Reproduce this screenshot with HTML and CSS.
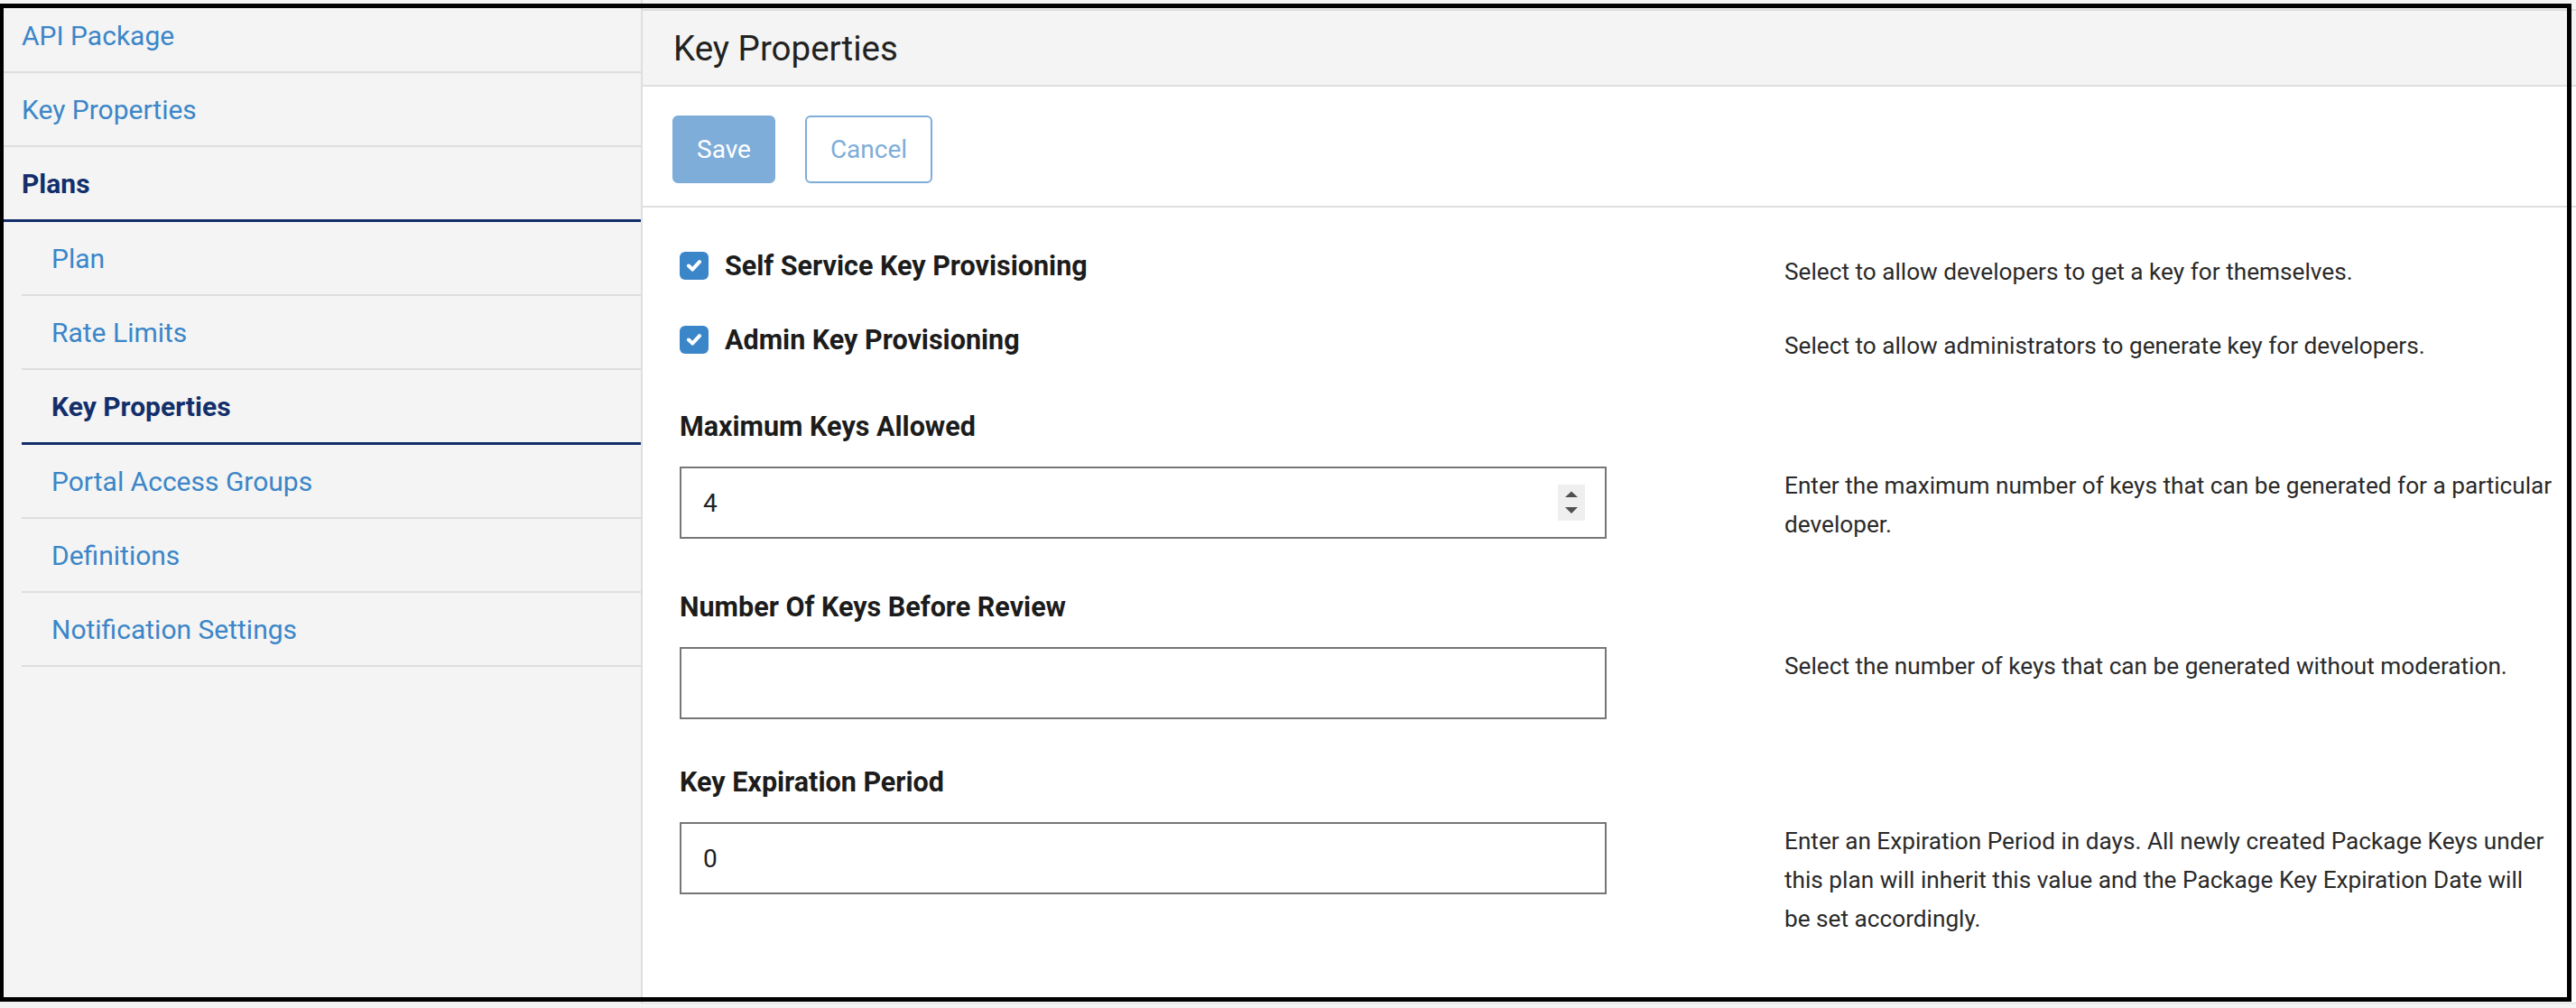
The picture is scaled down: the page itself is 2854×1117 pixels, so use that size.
FILE: index.html
```html
<!DOCTYPE html>
<html lang="en">
<head>
<meta charset="utf-8">
<title>Key Properties</title>
<link rel="stylesheet" href="styles.css">
</head>
<body>
<div class="app">
  <nav class="sidebar">
    <a class="nav-item" href="#">API Package</a>
    <a class="nav-item" href="#">Key Properties</a>
    <a class="nav-item active" href="#">Plans</a>
    <div class="subnav">
      <a class="nav-item" href="#">Plan</a>
      <a class="nav-item" href="#">Rate Limits</a>
      <a class="nav-item active" href="#">Key Properties</a>
      <a class="nav-item" href="#">Portal Access Groups</a>
      <a class="nav-item" href="#">Definitions</a>
      <a class="nav-item" href="#">Notification Settings</a>
    </div>
  </nav>
  <main class="main">
    <header class="title-bar"><h1>Key Properties</h1></header>
    <div class="content">
      <div class="toolbar">
        <button class="btn btn-primary" type="button">Save</button>
        <button class="btn btn-outline" type="button">Cancel</button>
      </div>
      <form class="form">
        <div class="row row-check">
          <label class="check-label"><span class="checkbox"><svg viewBox="0 0 32 31" width="32" height="31"><path d="M10 15.5 L14.2 19.6 L22 11.2" fill="none" stroke="#fff" stroke-width="4" stroke-linecap="round" stroke-linejoin="round"/></svg></span>Self Service Key Provisioning</label>
          <p class="help help-check">Select to allow developers to get a key for themselves.</p>
        </div>
        <div class="row row-check">
          <label class="check-label"><span class="checkbox"><svg viewBox="0 0 32 31" width="32" height="31"><path d="M10 15.5 L14.2 19.6 L22 11.2" fill="none" stroke="#fff" stroke-width="4" stroke-linecap="round" stroke-linejoin="round"/></svg></span>Admin Key Provisioning</label>
          <p class="help help-check">Select to allow administrators to generate key for developers.</p>
        </div>
        <div class="field">
          <div class="field-label">Maximum Keys Allowed</div>
          <div class="row">
            <div class="input-box">
              <input class="input-field" type="text" value="4">
              <span class="spinner"><svg viewBox="0 0 30 40" width="30" height="40"><polygon points="8,14 22,14 15,7.5" fill="#505050"/><polygon points="8,25 22,25 15,32" fill="#505050"/></svg></span>
            </div>
            <p class="help">Enter the maximum number of keys that can be generated for a particular developer.</p>
          </div>
        </div>
        <div class="field">
          <div class="field-label">Number Of Keys Before Review</div>
          <div class="row">
            <div class="input-box">
              <input class="input-field" type="text" value="">
            </div>
            <p class="help">Select the number of keys that can be generated without moderation.</p>
          </div>
        </div>
        <div class="field">
          <div class="field-label">Key Expiration Period</div>
          <div class="row">
            <div class="input-box">
              <input class="input-field" type="text" value="0">
            </div>
            <p class="help">Enter an Expiration Period in days. All newly created Package Keys under this plan will inherit this value and the Package Key Expiration Date will be set accordingly.</p>
          </div>
        </div>
      </form>
    </div>
  </main>
</div>
<div class="frame"></div>
</body>
</html>
```

FILE: styles.css
```css
html, body {
  margin: 0;
  padding: 0;
}
body {
  width: 2854px;
  height: 1117px;
  overflow: hidden;
  background: #f4f4f4;
  font-family: Roboto, "Liberation Sans", sans-serif;
  color: #222;
  position: relative;
}
.app {
  display: flex;
  height: 1112px;
}
.sidebar {
  width: 710px;
  flex: none;
  border-right: 2px solid #dedede;
  background: #f4f4f4;
  margin-top: -1px;
  display: flex;
  flex-direction: column;
}
.nav-item {
  display: flex;
  align-items: center;
  height: 80px;
  border-bottom: 2px solid #dedede;
  padding-left: 24px;
  font-size: 30px;
  color: #3b86c8;
  text-decoration: none;
}
.nav-item.active {
  color: #132f6b;
  font-weight: 700;
  border-bottom: 3px solid #132f6b;
}
.subnav {
  margin-left: 24px;
  display: flex;
  flex-direction: column;
}
.subnav .nav-item {
  padding-left: 33px;
}
.main {
  flex: 1;
  display: flex;
  flex-direction: column;
  padding-top: 10px;
  min-width: 0;
}
.title-bar {
  height: 82px;
  border-top: 2px solid #dedede;
  border-bottom: 2px solid #dedede;
  background: #f4f4f4;
  padding-left: 34px;
  display: flex;
  align-items: center;
}
.title-bar h1 {
  margin: 0;
  font-size: 38.5px;
  font-weight: 400;
  color: #222;
}
.content {
  flex: 1;
  background: #fff;
  border-bottom: 1px solid #dedede;
}
.toolbar {
  display: flex;
  gap: 33px;
  padding: 32px 33px 25px;
  border-bottom: 2px solid #dedede;
}
.btn {
  height: 75px;
  border-radius: 6px;
  font-family: inherit;
  font-size: 28px;
  padding: 0;
}
.btn-primary {
  width: 114px;
  background: #7eadd9;
  border: 2px solid #7eadd9;
  color: #fff;
}
.btn-outline {
  width: 141px;
  background: #fff;
  border: 2px solid #7eadd9;
  color: #7eadd9;
}
.form {
  padding: 23px 0 0 41px;
}
.row {
  display: grid;
  grid-template-columns: 1027px 852px;
  column-gap: 197px;
  align-items: start;
}
.row-check {
  height: 82px;
}
.check-label {
  display: flex;
  align-items: center;
  height: 82px;
  font-size: 30.5px;
  font-weight: 700;
  color: #1c1c1c;
}
.checkbox {
  width: 32px;
  height: 31px;
  border-radius: 6px;
  background: #3b86c9;
  margin-right: 18px;
  flex: none;
  display: flex;
}
.help {
  margin: 0;
  font-size: 26.2px;
  line-height: 43px;
  color: #2a2a2a;
}
.help-check {
  padding-top: 27px;
}
.field {
  margin-top: 34px;
}
.field + .field {
  margin-top: 48px;
}
.field-label {
  font-size: 30.5px;
  font-weight: 700;
  line-height: 43px;
  color: #1c1c1c;
  margin-bottom: 23px;
}
.input-box {
  height: 80px;
  box-sizing: border-box;
  border: 2px solid #767676;
  display: flex;
  align-items: center;
  padding: 0 22px 0 24px;
}
.input-field {
  flex: 1;
  min-width: 0;
  border: none;
  outline: none;
  padding: 0;
  font-family: inherit;
  font-size: 28px;
  color: #222;
  background: transparent;
}
.spinner {
  width: 30px;
  height: 40px;
  background: #efefef;
  display: flex;
}
.frame {
  position: absolute;
  left: -1px;
  top: 4px;
  width: 2850px;
  height: 1106px;
  box-sizing: border-box;
  border: 5px solid #000;
  pointer-events: none;
}
```
